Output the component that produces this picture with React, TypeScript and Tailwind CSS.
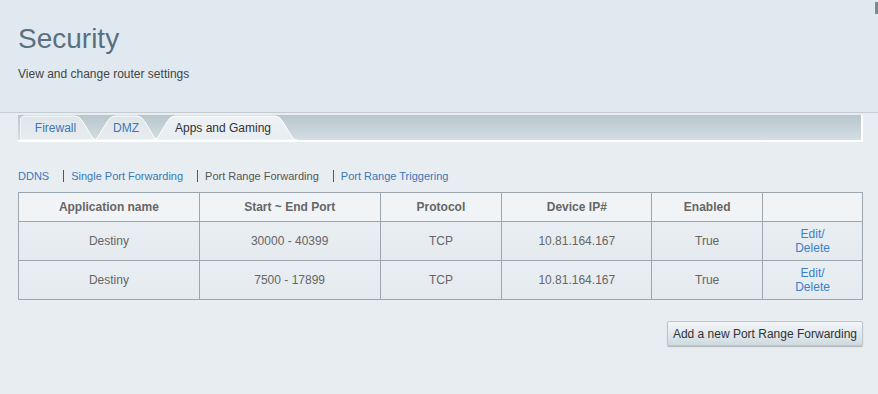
import React from "react";

const font = { fontFamily: '"Liberation Sans", Arial, sans-serif' };

function Tab({ id, label, width, active, first, className }: { id: string; label: string; width: number; active?: boolean; first?: boolean; className?: string }) {
  const h = 25;
  const w = width;
  const d = first
    ? `M0 ${h} L0 6 Q0 1 6 1 L${w - 22} 1 Q${w - 17} 1 ${w - 14} 7 L${w - 5} ${h - 3} Q${w - 3} ${h} ${w} ${h} Z`
    : `M0 ${h} Q3 ${h} 5 ${h - 3} L14 7 Q17 1 22 1 L${w - 22} 1 Q${w - 17} 1 ${w - 14} 7 L${w - 5} ${h - 3} Q${w - 3} ${h} ${w} ${h} Z`;
  return (
    <div className={`relative flex items-center justify-center h-[25px] ${className ?? ""} ${active ? "z-10" : ""}`} style={{ width: w }}>
      <svg className="absolute inset-0" width={w} height={h} viewBox={`0 0 ${w} ${h}`}>
        <defs>
          <linearGradient id={`tab-${id}`} x1="0" y1="0" x2="0" y2="1">
            <stop offset="0" stopColor={active ? "#eef2f5" : "#dfe6ea"} />
            <stop offset="1" stopColor={active ? "#e8edf1" : "#e7ecef"} />
          </linearGradient>
        </defs>
        <path d={d} fill={`url(#tab-${id})`} stroke="#ffffff" strokeWidth="1" />
      </svg>
      <span className={`relative text-[12px] pt-[1px] ${active ? "text-[#333] pr-[4px]" : "text-[#3a78b6]"} ${first ? "pr-[6px]" : ""}`}>
        {label}
      </span>
    </div>
  );
}

const cols = ["w-[181px]", "w-[181px]", "w-[122px]", "w-[150px]", "w-[111px]", "w-[100px]"];
const headers = ["Application name", "Start ~ End Port", "Protocol", "Device IP#", "Enabled", ""];
const rows = [
  ["Destiny", "30000 - 40399", "TCP", "10.81.164.167", "True"],
  ["Destiny", "7500 - 17899", "TCP", "10.81.164.167", "True"],
];

export default function App() {
  return (
    <div className="w-[878px] h-[394px] overflow-hidden bg-[#e8edf1] relative" style={font}>
      <div className="h-[113px] bg-[#e1e9f0] border-b border-[#c5cdd3] pl-[18px] pt-[23px]">
        <h1 className="text-[28px] leading-[32px] text-[#587080]">Security</h1>
        <p className="mt-[10px] text-[12px] text-[#444]">View and change router settings</p>
      </div>
      <div className="absolute right-0 top-[2px] w-[3px] h-[12px] bg-[#7d8a93]" />

      <div className="pl-[18px] pr-[15px] pt-[2px]">
        <div className="h-[27px] bg-gradient-to-b from-[#b8c6cd] to-[#d4dee3] border-r-2 border-b-2 border-white flex items-end pl-[2px]">
          <Tab id="fw" label="Firewall" width={77} first />
          <Tab id="dmz" label="DMZ" width={66} className="-ml-[4px]" />
          <Tab id="apps" label="Apps and Gaming" width={144} active className="-ml-[6px]" />
        </div>

        <div className="mt-[27px] flex items-center text-[11px] h-[14px]">
          <span className="text-[#3a78b6]">DDNS</span>
          <span className="ml-[14px] mr-[7px] h-[12px] w-px bg-[#555]" />
          <span className="text-[#3a78b6]">Single Port Forwarding</span>
          <span className="ml-[14px] mr-[7px] h-[12px] w-px bg-[#555]" />
          <span className="text-[#555]">Port Range Forwarding</span>
          <span className="ml-[14px] mr-[7px] h-[12px] w-px bg-[#555]" />
          <span className="text-[#3a78b6]">Port Range Triggering</span>
        </div>

        <table className="mt-[9px] border-collapse border border-[#9ba6ae] text-[12px]">
          <thead>
            <tr className="h-[29px] bg-[#f1f4f7]">
              {headers.map((h, i) => (
                <th key={i} className={`${cols[i]} border border-[#9ba6ae] font-bold text-[#666] text-center p-0`}>
                  {h}
                </th>
              ))}
            </tr>
          </thead>
          <tbody>
            {rows.map((r, ri) => (
              <tr key={ri} className="h-[39px] bg-gradient-to-b from-[#e9eef2] to-[#e4eaee]">
                {r.map((c, ci) => (
                  <td key={ci} className="border border-[#9ba6ae] text-[#666] text-center p-0">
                    {c}
                  </td>
                ))}
                <td className="border border-[#9ba6ae] text-center p-0 text-[#3a7fc9] leading-[14px]">
                  Edit/
                  <br />
                  Delete
                </td>
              </tr>
            ))}
          </tbody>
        </table>

        <div className="flex justify-end mt-[21px]">
          <button className="h-[25px] px-[5px] text-[12px] text-[#333] rounded-[2px] border border-[#bcc6cc] bg-gradient-to-b from-[#f3f6f8] to-[#cfdbe1] shadow-[0_1px_1px_rgba(0,0,0,0.25)]">
            Add a new Port Range Forwarding
          </button>
        </div>
      </div>
    </div>
  );
}
